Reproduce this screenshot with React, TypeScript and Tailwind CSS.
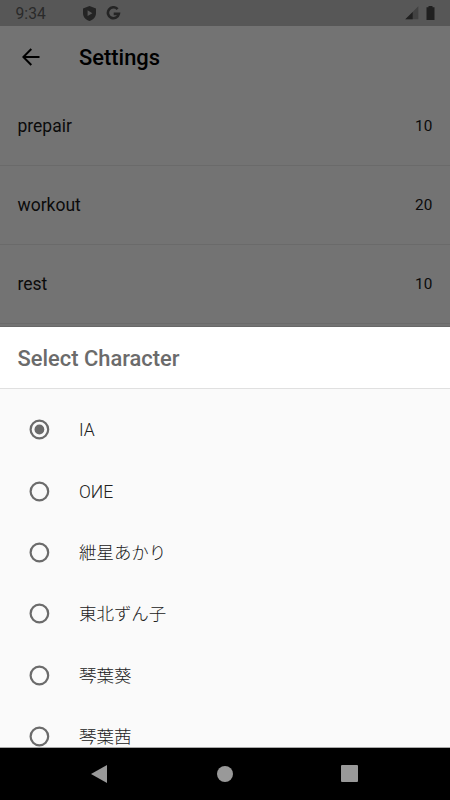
type SettingRowProps = {
  label: string;
  value: number;
};

type CharacterRowProps = {
  name: string;
  selected: boolean;
};

const settings: SettingRowProps[] = [
  { label: "prepair", value: 10 },
  { label: "workout", value: 20 },
  { label: "rest", value: 10 },
];

const characters = ["IA", "OИE", "紲星あかり", "東北ずん子", "琴葉葵", "琴葉茜"];

function StatusBar() {
  return (
    <div className="flex h-[26px] shrink-0 items-center justify-between bg-[#575757] pr-[15px] pl-[15.5px] text-[#242424]">
      <div className="flex items-center">
        <span className="w-[66.5px] pt-[2px] text-[15.6px] leading-[26px] tracking-[0.1px] text-[#2a2a2a]">
          9:34
        </span>
        <svg className="h-[15px] w-[15px]" viewBox="0 0 15 15">
          <path
            fillRule="evenodd"
            fill="currentColor"
            d="M7.500 0 14 2.400v4.800c0 3.600-2.600 6.500-6.500 7.800C3.600 13.700 1 10.800 1 7.200V2.400ZM5.600 4.300v5.800L10.400 7.200Z"
          />
        </svg>
        <svg className="ml-[9px] h-[15px] w-[15px]" viewBox="0 0 15 15">
          <path
            fill="none"
            stroke="currentColor"
            strokeWidth="2.6"
            d="M11.600 3.200A5.500 5.500 0 1 0 12.800 7.900H7.700"
          />
        </svg>
      </div>
      <div className="flex items-center">
        <svg className="h-[14px] w-[14px]" viewBox="0 0 14 14">
          <path d="M13.300 0.300V13.300H0.300Z" fill="#424242" />
          <path d="M7.700 5.900V13.300H0.300Z" fill="#202020" />
        </svg>
        <svg className="ml-[7px] h-[14px] w-[9px]" viewBox="0 0 9 14">
          <path d="M2.500 0h4v1.300H8.500V14H0.500V1.300h2Z" fill="#202020" />
        </svg>
      </div>
    </div>
  );
}

function SettingRow({ label, value }: SettingRowProps) {
  return (
    <div className="flex h-[79px] shrink-0 items-center justify-between border-b border-[#6a6a6a] px-[17.5px] pt-[1.5px] text-[#0b0b0b]">
      <span className="text-[17.5px] leading-[27px]">{label}</span>
      <span className="text-[15.3px] tracking-[0.1px]">{value}</span>
    </div>
  );
}

function CharacterRow({ name, selected }: CharacterRowProps) {
  return (
    <div className="flex h-[61.3px] shrink-0 items-center pl-[29px]">
      <svg className="h-[21px] w-[21px]" viewBox="0 0 21 21">
        <circle cx="10.400" cy="10.500" r="8.800" fill="none" stroke="#6b6b6b" strokeWidth="2.2" />
        {selected && <circle cx="10.400" cy="10.500" r="4.900" fill="#6b6b6b" />}
      </svg>
      <span className="ml-[29px] pt-[1px] text-[17.5px] leading-[26px] font-light tracking-[-0.05px] text-[#212121]">
        {name}
      </span>
    </div>
  );
}

function NavigationBar() {
  return (
    <div className="flex h-[53px] shrink-0 items-center justify-between border-t border-[#a8a8a8] bg-black pr-[92px] pb-[1px] pl-[91px] text-[#999]">
      <svg className="h-[18px] w-[17px]" viewBox="0 0 17 18">
        <path d="M16 0v18L0 9Z" fill="currentColor" />
      </svg>
      <div className="h-4 w-4 rounded-full bg-[#999]" />
      <div className="h-[17px] w-[17px] rounded-[1px] bg-[#999]" />
    </div>
  );
}

export default function App() {
  return (
    <div
      lang="ja"
      className="flex h-[800px] w-[450px] flex-col overflow-hidden bg-[#737373] font-[Roboto,'Noto_Sans_CJK_JP',sans-serif]"
    >
      <StatusBar />
      {/* Dimmed settings screen */}
      <div className="flex h-[301px] shrink-0 flex-col overflow-hidden border-b border-[#686868]">
        <header className="flex h-[61px] shrink-0 items-center pl-[22px] text-black">
          <svg className="h-[18px] w-[18px]" viewBox="0 0 18 18">
            <path
              d="M17.500 9H1.500M9.300 1 1.300 9l8 8"
              fill="none"
              stroke="currentColor"
              strokeWidth="2"
            />
          </svg>
          <h1 className="ml-[39px] pt-[3px] text-[21.9px] font-medium">
            Settings
          </h1>
        </header>
        {settings.map((setting) => (
          <SettingRow key={setting.label} {...setting} />
        ))}
      </div>
      {/* Bottom sheet */}
      <div className="flex h-[420px] shrink-0 flex-col overflow-hidden bg-[#fafafa]">
        <div className="flex h-[62px] shrink-0 items-center border-b border-[#e0e0e0] bg-white pt-[3px] pl-[17.5px]">
          <h2 className="text-[21.9px] font-medium text-[#6b6b6b]">
            Select Character
          </h2>
        </div>
        <div className="flex flex-col pt-[10.3px]">
          {characters.map((name, idx) => (
            <CharacterRow key={name} name={name} selected={idx === 0} />
          ))}
        </div>
      </div>
      <NavigationBar />
    </div>
  );
}
